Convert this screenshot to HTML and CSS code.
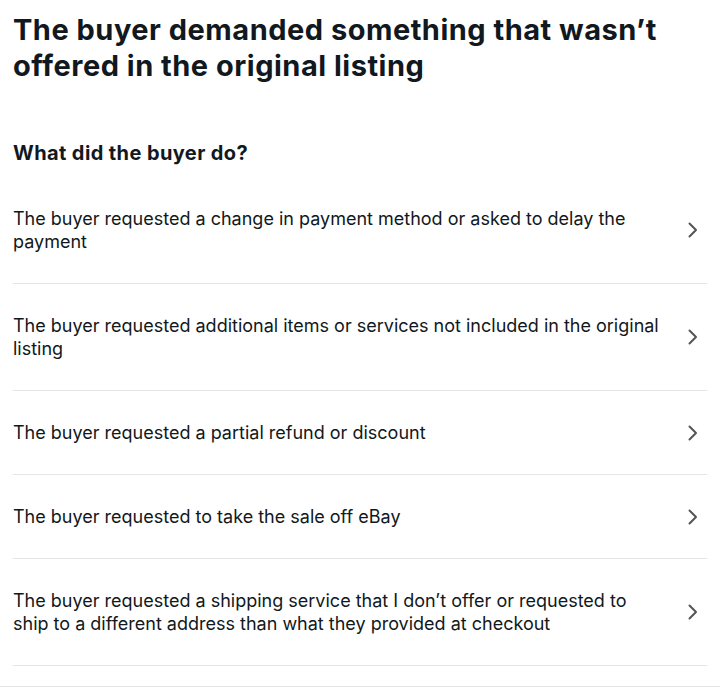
FILE: index.html
```html
<!DOCTYPE html>
<html lang="en">
<head>
<meta charset="utf-8">
<title>What did the buyer do?</title>
<link rel="stylesheet" href="styles.css">
</head>
<body>
<main class="page">
  <h1 class="title">The buyer demanded something that wasn’t offered in the original listing</h1>
  <h2 class="subtitle">What did the buyer do?</h2>
  <ul class="options">
    <li class="option"><span class="option-text">The buyer requested a change in payment method or asked to delay the payment</span><svg class="chev" viewBox="0 0 10 16" width="10" height="16"><path d="M1.5 1.5 L8 8 L1.5 14.5" fill="none" stroke="#555" stroke-width="2" stroke-linecap="round" stroke-linejoin="round"/></svg></li>
    <li class="option"><span class="option-text">The buyer requested additional items or services not included in the original listing</span><svg class="chev" viewBox="0 0 10 16" width="10" height="16"><path d="M1.5 1.5 L8 8 L1.5 14.5" fill="none" stroke="#555" stroke-width="2" stroke-linecap="round" stroke-linejoin="round"/></svg></li>
    <li class="option"><span class="option-text">The buyer requested a partial refund or discount</span><svg class="chev" viewBox="0 0 10 16" width="10" height="16"><path d="M1.5 1.5 L8 8 L1.5 14.5" fill="none" stroke="#555" stroke-width="2" stroke-linecap="round" stroke-linejoin="round"/></svg></li>
    <li class="option"><span class="option-text">The buyer requested to take the sale off eBay</span><svg class="chev" viewBox="0 0 10 16" width="10" height="16"><path d="M1.5 1.5 L8 8 L1.5 14.5" fill="none" stroke="#555" stroke-width="2" stroke-linecap="round" stroke-linejoin="round"/></svg></li>
    <li class="option"><span class="option-text">The buyer requested a shipping service that I don’t offer or requested to ship to a different address than what they provided at checkout</span><svg class="chev" viewBox="0 0 10 16" width="10" height="16"><path d="M1.5 1.5 L8 8 L1.5 14.5" fill="none" stroke="#555" stroke-width="2" stroke-linecap="round" stroke-linejoin="round"/></svg></li>
  </ul>
  <div class="footer-rule"></div>
</main>
</body>
</html>
```

FILE: styles.css
```css
* { box-sizing: border-box; }
html, body { margin: 0; padding: 0; background: #fff; }
body {
  font-family: Inter, "Open Sans", "Liberation Sans", sans-serif;
  color: #111820;
}
.page {
  padding-top: 12px;
}
.title {
  margin: 0 13px;
  font-size: 29px;
  line-height: 36px;
  font-weight: 700;
  letter-spacing: 0.5px;
  max-width: 670px;
}
.subtitle {
  margin: 57px 13px 0;
  font-size: 20px;
  line-height: 24px;
  font-weight: 700;
  letter-spacing: 0.4px;
}
.options {
  list-style: none;
  margin: 12px 13px 0;
  padding: 0;
}
.option {
  display: flex;
  align-items: center;
  justify-content: space-between;
  gap: 24px;
  padding: 30px 0;
  border-bottom: 1px solid #e5e5e5;
}
.option-text {
  font-size: 18px;
  line-height: 23px;
  max-width: 650px;
}
.chev {
  flex: none;
  margin-right: 9px;
}
.footer-rule {
  margin-top: 20px;
  border-top: 1px solid #e5e5e5;
}
```
